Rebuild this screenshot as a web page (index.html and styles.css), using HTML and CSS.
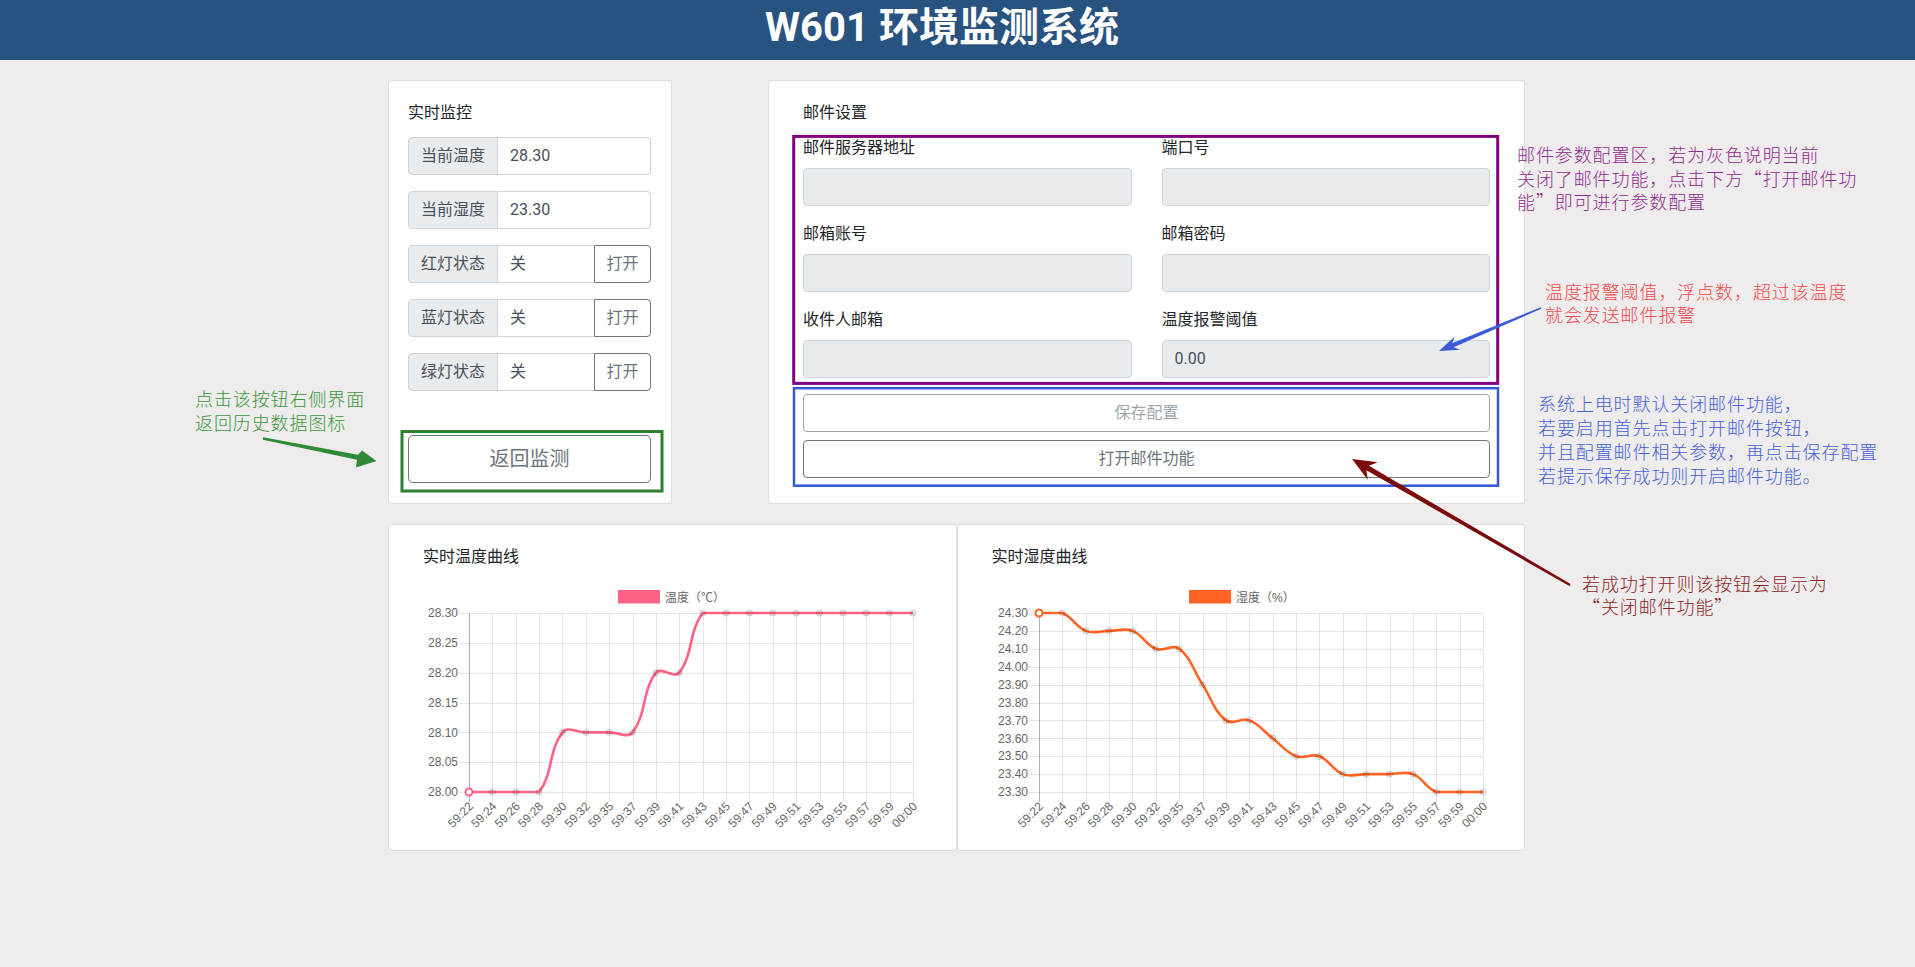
FILE: index.html
```html
<!DOCTYPE html>
<html lang="zh-CN">
<head>
<meta charset="utf-8">
<title>W601 环境监测系统</title>
<link rel="stylesheet" href="styles.css">
</head>
<body>
<header class="topbar"><h1 class="topbar-title">W601 环境监测系统</h1></header>
<main class="page">
  <div class="row-top">
    <section class="card card-monitor">
      <h2 class="card-title">实时监控</h2>
      <div class="igroup"><span class="igroup-label">当前温度</span><span class="igroup-value">28.30</span></div>
      <div class="igroup"><span class="igroup-label">当前湿度</span><span class="igroup-value">23.30</span></div>
      <div class="igroup"><span class="igroup-label">红灯状态</span><span class="igroup-value has-btn">关</span><button class="igroup-btn">打开</button></div>
      <div class="igroup"><span class="igroup-label">蓝灯状态</span><span class="igroup-value has-btn">关</span><button class="igroup-btn">打开</button></div>
      <div class="igroup"><span class="igroup-label">绿灯状态</span><span class="igroup-value has-btn">关</span><button class="igroup-btn">打开</button></div>
      <button class="btn-back">返回监测</button>
    </section>
    <section class="card card-mail">
      <h2 class="card-title mail-title">邮件设置</h2>
      <div class="mail-grid">
        <div class="field"><label class="field-label">邮件服务器地址</label><div class="field-input"></div></div>
        <div class="field"><label class="field-label">端口号</label><div class="field-input"></div></div>
        <div class="field"><label class="field-label">邮箱账号</label><div class="field-input"></div></div>
        <div class="field"><label class="field-label">邮箱密码</label><div class="field-input"></div></div>
        <div class="field"><label class="field-label">收件人邮箱</label><div class="field-input"></div></div>
        <div class="field"><label class="field-label">温度报警阈值</label><div class="field-input">0.00</div></div>
      </div>
      <button class="btn-wide btn-save">保存配置</button>
      <button class="btn-wide">打开邮件功能</button>
    </section>
  </div>
  <div class="row-charts">
    <section class="card chart-card">
      <h2 class="card-title chart-title">实时温度曲线</h2>
      <svg id="tempChart" class="chart" width="497" height="250" viewBox="0 0 497 250"></svg>
    </section>
    <section class="card chart-card">
      <h2 class="card-title chart-title">实时湿度曲线</h2>
      <svg id="humiChart" class="chart" width="497" height="250" viewBox="0 0 497 250"></svg>
    </section>
  </div>
</main>

<svg class="annot-layer" width="1915" height="967" viewBox="0 0 1915 967">
  <rect x="402" y="431.5" width="260" height="59.5" fill="none" stroke="#2e7f2e" stroke-width="3"/>
  <rect x="793.7" y="136.4" width="704" height="247" fill="none" stroke="#800080" stroke-width="3"/>
  <rect x="794" y="388.2" width="704" height="97.5" fill="none" stroke="#3657d4" stroke-width="2.5"/>
  <polygon points="263,437.2 358,454.8 362,450.5 376.5,461 356,467.5 357,459.8 263,439.7" fill="#2f8a35"/>
  <polygon points="1540.7,307.3 1452.1,343.3 1454.7,336.6 1439,351 1460.1,349.8 1453.6,347.2 1541.3,308.7" fill="#3b5bd9"/>
  <polygon points="1570.6,583.96 1368.85,465.83 1377.78,462.34 1352,459 1367.78,479.66 1366.35,470.17 1569.4,586.04" fill="#7b0a0a"/>
</svg>
<p class="note note-green">点击该按钮右侧界面<br>返回历史数据图标</p>
<p class="note note-purple">邮件参数配置区，若为灰色说明当前<br>关闭了邮件功能，点击下方“打开邮件功<br>能”即可进行参数配置</p>
<p class="note note-red">温度报警阈值，浮点数，超过该温度<br>就会发送邮件报警</p>
<p class="note note-blue">系统上电时默认关闭邮件功能，<br>若要启用首先点击打开邮件按钮，<br>并且配置邮件相关参数，再点击保存配置<br>若提示保存成功则开启邮件功能。</p>
<p class="note note-maroon">若成功打开则该按钮会显示为<br>“关闭邮件功能”</p>
<script src="script.js"></script>
</body>
</html>
```

FILE: styles.css
```css
* { box-sizing: border-box; }
html, body { margin: 0; padding: 0; }
body {
  background: #eeecec;
  font-family: Roboto, "Noto Sans CJK SC", sans-serif;
  font-size: 16px;
  line-height: 1.5;
  color: #212529;
  position: relative;
  min-height: 967px;
}
.topbar { height: 60px; background: #28527f; padding-right: 31px; }
.topbar-title {
  margin: 0;
  text-align: center;
  color: #fff;
  font-size: 40px;
  font-weight: 700;
  line-height: 55px;
}
.page { width: 1137px; margin: 20px 0 0 calc(50% - 569.5px); }
.row-top { display: grid; grid-template-columns: 284px 1fr; column-gap: 96px; align-items: stretch; }
.card { background: #fff; border: 1px solid rgba(0,0,0,.125); border-radius: 4px; }
.card-monitor { padding: 20px 20px 20px 19px; }
.card-mail { padding: 20px 34px; }
.card-title { margin: 0 0 12px; font-size: 16px; font-weight: 400; line-height: 24px; }
.mail-title, .chart-title { margin-bottom: 11px; }

.igroup { display: flex; height: 38px; margin-bottom: 16px; }
.igroup-label {
  width: 90px; flex: none; display: flex; align-items: center; padding: 0 12px;
  background: #e9ecef; border: 1px solid #ced4da; border-radius: 4px 0 0 4px; color: #495057;
}
.igroup-value {
  flex: 1; display: flex; align-items: center; padding: 0 12px;
  border: 1px solid #ced4da; border-left: 0; border-radius: 0 4px 4px 0; color: #495057;
}
.igroup-value.has-btn { border-radius: 0; border-right: 0; }
.igroup-btn {
  flex: none; width: 57px; border: 1px solid #6c757d; border-radius: 0 4px 4px 0;
  background: #fff; color: #6c757d; font: inherit; padding: 0;
}
.btn-back {
  display: block; width: 100%; height: 48px; margin-top: 44px;
  border: 1px solid #6c757d; border-radius: 5px; background: #fff; color: #6c757d;
  font: inherit; font-size: 20px;
}

.mail-grid { display: grid; grid-template-columns: 1fr 1fr; column-gap: 30px; row-gap: 16px; }
.field-label { display: block; margin-bottom: 8px; line-height: 24px; }
.field-input {
  height: 38px; background: #e9ecef; border: 1px solid #ced4da; border-radius: 4px;
  padding: 0 12px; display: flex; align-items: center; color: #495057;
}
.btn-wide {
  display: block; width: 100%; height: 38px; border: 1px solid #6c757d; border-radius: 4px;
  background: #fff; color: #6c757d; font: inherit; padding: 0;
}
.btn-save { margin: 16px 0 8px; opacity: .65; }

.row-charts { display: grid; grid-template-columns: 1fr 1fr; margin-top: 20px; }
.chart-card { padding: 20px 34px; }
.chart { display: block; width: 497px; height: 250px; overflow: visible; }
.chart .tick { font: 12px "Liberation Sans", "Noto Sans CJK SC", sans-serif; fill: #666; }
.chart .legend { font: 12px "Liberation Sans", "Noto Sans CJK SC", sans-serif; fill: #666; }

.annot-layer { position: absolute; left: 0; top: 0; width: 1915px; height: 967px; pointer-events: none; overflow: visible; }
.note {
  position: absolute; margin: 0;
  font-family: "Noto Sans CJK SC", sans-serif; font-size: 18px; font-weight: 300;
  letter-spacing: 0.9px; white-space: nowrap;
}
.note-green { left: 195px; top: 386px; line-height: 24px; color: #3a963a; }
.note-purple { left: 1517px; top: 143px; line-height: 23.5px; color: #8e2b8e; }
.note-red { left: 1545px; top: 279.5px; line-height: 23px; color: #f04848; }
.note-blue { left: 1538px; top: 391px; line-height: 24px; color: #4562d6; }
.note-maroon { left: 1582px; top: 571.5px; line-height: 23px; color: #8a1f1f; }
```

FILE: script.js
```js
(function () {
  var NS = 'http://www.w3.org/2000/svg';
  var labels = ['59:22','59:24','59:26','59:28','59:30','59:32','59:35','59:37','59:39','59:41',
                '59:43','59:45','59:47','59:49','59:51','59:53','59:55','59:57','59:59','00:00'];
  function el(tag, attrs, parent, text) {
    var e = document.createElementNS(NS, tag);
    for (var k in attrs) e.setAttribute(k, attrs[k]);
    if (text != null) e.textContent = text;
    parent.appendChild(e);
    return e;
  }
  function clamp(v, a, b) { return Math.min(Math.max(v, a), b); }
  function build(svg, c) {
    var n = c.data.length, L = c.left, R = c.right, T = c.top, B = c.bottom;
    var ticks = Math.round((c.max - c.min) / c.step);
    var g = el('g', {}, svg);
    for (var i = 0; i <= ticks; i++) {
      var v = c.min + i * c.step;
      var y = B - (i / ticks) * (B - T);
      var yy = Math.round(y) + 0.5;
      el('line', {x1: L - 10, x2: R, y1: yy, y2: yy, stroke: 'rgba(0,0,0,0.1)', 'stroke-width': 1}, g);
      el('text', {x: L - 11, y: y, 'text-anchor': 'end', dy: '0.35em', 'class': 'tick'}, g, v.toFixed(2));
    }
    for (var j = 0; j < n; j++) {
      var x = L + j * (R - L) / (n - 1);
      var xx = Math.round(x) + 0.5;
      el('line', {x1: xx, x2: xx, y1: T, y2: B + 10, stroke: j === 0 ? 'rgba(0,0,0,0.3)' : 'rgba(0,0,0,0.1)', 'stroke-width': 1}, g);
      el('text', {transform: 'translate(' + (x + 2) + ',' + (B + 12) + ') rotate(-45)', 'text-anchor': 'end', dy: '0.35em', 'class': 'tick'}, g, labels[j]);
    }
    var pts = c.data.map(function (v, j) {
      return {x: L + j * (R - L) / (n - 1), y: B - (v - c.min) / (c.max - c.min) * (B - T)};
    });
    var t = 0.4;
    var cps = pts.map(function (p, j) {
      var p0 = pts[j - 1] || p, p2 = pts[j + 1] || p;
      var d01 = Math.hypot(p.x - p0.x, p.y - p0.y), d12 = Math.hypot(p2.x - p.x, p2.y - p.y);
      var s01 = d01 / (d01 + d12), s12 = d12 / (d01 + d12);
      if (isNaN(s01)) s01 = 0;
      if (isNaN(s12)) s12 = 0;
      var fa = t * s01, fb = t * s12;
      return {
        px: clamp(p.x - fa * (p2.x - p0.x), L, R), py: clamp(p.y - fa * (p2.y - p0.y), T, B),
        nx: clamp(p.x + fb * (p2.x - p0.x), L, R), ny: clamp(p.y + fb * (p2.y - p0.y), T, B)
      };
    });
    var d = 'M' + pts[0].x.toFixed(2) + ',' + pts[0].y.toFixed(2);
    for (var k = 1; k < n; k++) {
      d += ' C' + cps[k - 1].nx.toFixed(2) + ',' + cps[k - 1].ny.toFixed(2) + ' ' +
           cps[k].px.toFixed(2) + ',' + cps[k].py.toFixed(2) + ' ' +
           pts[k].x.toFixed(2) + ',' + pts[k].y.toFixed(2);
    }
    el('path', {d: d, fill: 'none', stroke: c.color, 'stroke-width': 2.6, 'stroke-linejoin': 'round'}, svg);
    pts.forEach(function (p, j) {
      if (j === 0) {
        el('circle', {cx: p.x, cy: p.y, r: 3.5, fill: '#fff', stroke: c.color, 'stroke-width': 2}, svg);
      } else {
        el('circle', {cx: p.x, cy: p.y, r: 3.2, fill: 'rgba(0,0,0,0.1)', stroke: 'rgba(0,0,0,0.1)', 'stroke-width': 1}, svg);
      }
    });
    el('rect', {x: c.legendX, y: 10, width: 42, height: 13.5, fill: c.color}, svg);
    el('text', {x: c.legendTextX, y: 21.5, 'class': 'legend'}, svg, c.legendText);
  }
  build(document.getElementById('tempChart'), {
    data: [28.00,28.00,28.00,28.00,28.10,28.10,28.10,28.10,28.20,28.20,28.30,28.30,28.30,28.30,28.30,28.30,28.30,28.30,28.30,28.30],
    min: 28.00, max: 28.30, step: 0.05, left: 46, right: 490, top: 33, bottom: 212,
    color: '#ff6384', legendX: 195, legendTextX: 242, legendText: '温度（℃）'
  });
  build(document.getElementById('humiChart'), {
    data: [24.30,24.30,24.20,24.20,24.20,24.10,24.10,23.90,23.70,23.70,23.60,23.50,23.50,23.40,23.40,23.40,23.40,23.30,23.30,23.30],
    min: 23.30, max: 24.30, step: 0.1, left: 47, right: 491, top: 33, bottom: 212,
    color: '#ff6424', legendX: 197, legendTextX: 244, legendText: '湿度（%）'
  });
})();
```
